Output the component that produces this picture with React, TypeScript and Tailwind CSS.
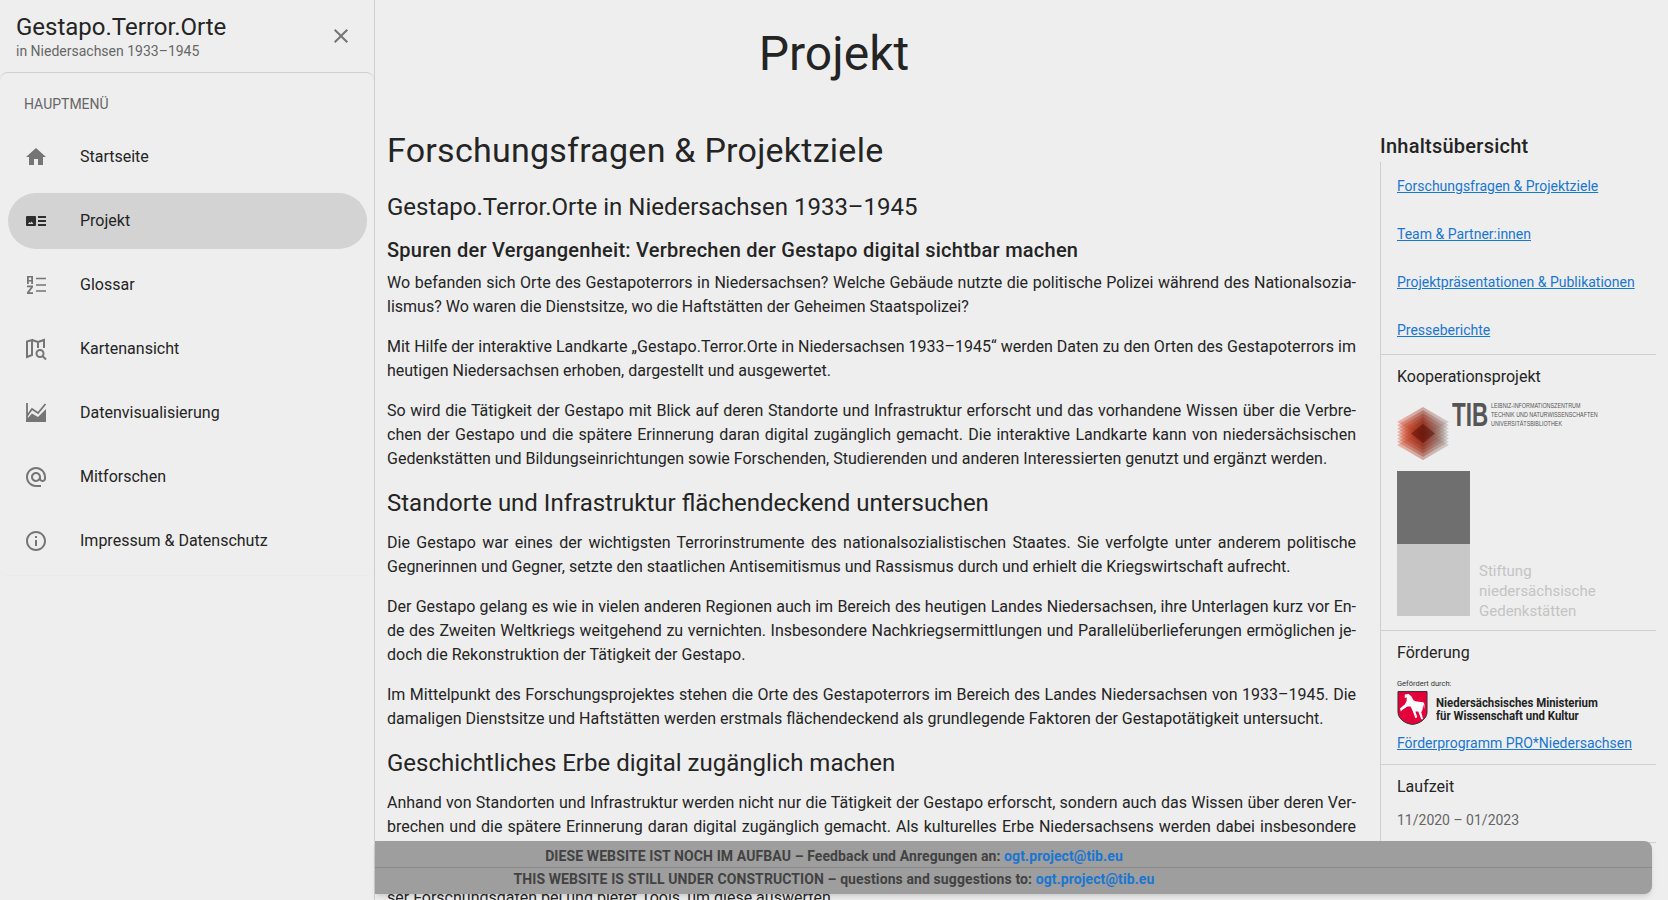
import { MdClose, MdHome, MdInfoOutline, MdOutlineAlternateEmail } from 'react-icons/md';

type NavItem = {
  label: string;
  icon: React.ReactNode;
  active?: boolean;
};

const ProjektIcon = () => (
  <svg viewBox="0 0 24 24" className="w-6 h-6 fill-[#2e2e2e]">
    <path d="M3 7h8a1 1 0 0 1 1 1v8a1 1 0 0 1-1 1H3a1 1 0 0 1-1-1V8a1 1 0 0 1 1-1z" />
    <path d="M4 15l1.500-2 1 1 1-1.500 2 2.500z" fill="#d3d3d3" />
    <path d="M14 7h8v2h-8zM14 11h8v2h-8zM14 15h8v2h-8z" />
  </svg>
);

const GlossarIcon = () => (
  <svg viewBox="0 0 24 24" className="w-6 h-6 fill-[#757575]">
    <path fillRule="evenodd" d="M3 3h6v8H7.200V8.500H4.800V11H3zM4.800 4.600V7h2.400V4.600zM3 12.500h6v1.800L5.200 19.300H9V21H3v-1.800l3.800-5H3z" />
    <path d="M12 4.700h10v1.600H12zM12 11.200h10v1.600H12zM12 17.200h10v1.600H12z" />
  </svg>
);

const KarteIcon = () => (
  <svg viewBox="0 0 24 24" className="w-6 h-6 fill-none stroke-[#757575] stroke-2">
    <path d="M3 4.500L8 3v15l-5 2zM8 3l6 2v6M14 5l6-2v8" />
    <circle cx="16" cy="16.500" r="3.500" />
    <path d="M18.500 19l3.500 3.500" />
  </svg>
);

const ChartIcon = () => (
  <svg viewBox="0 0 24 24" className="w-6 h-6">
    <path d="M2 21v-2l6-6.500 6 3.500 8-8v13z" fill="#757575" />
    <path d="M3 2v19M3 15l5-7 6 4 7.500-9" fill="none" stroke="#757575" strokeWidth="1.800" />
  </svg>
);

const navItems: NavItem[] = [
  { label: 'Startseite', icon: <MdHome className="w-6 h-6 text-[#757575]" /> },
  { label: 'Projekt', icon: <ProjektIcon />, active: true },
  { label: 'Glossar', icon: <GlossarIcon /> },
  { label: 'Kartenansicht', icon: <KarteIcon /> },
  { label: 'Datenvisualisierung', icon: <ChartIcon /> },
  { label: 'Mitforschen', icon: <MdOutlineAlternateEmail className="w-6 h-6 text-[#757575]" /> },
  { label: 'Impressum & Datenschutz', icon: <MdInfoOutline className="w-6 h-6 text-[#757575]" /> },
];

const tocLinks = [
  'Forschungsfragen & Projektziele',
  'Team & Partner:innen',
  'Projektpräsentationen & Publikationen',
  'Presseberichte',
];

const TibHex = () => {
  // stacked translucent rhombs, red on the left, grey on the right
  const layers = [0, 1, 2, 3, 4, 5, 6, 7];
  return (
    <svg viewBox="0 0 52 53" className="w-[52px] h-[53px] shrink-0">
      <defs>
        <linearGradient id="tibFade" x1="0" x2="1" y1="0" y2="0">
          <stop offset="0" stopColor="#e0401a" />
          <stop offset="0.5" stopColor="#8a1f0c" />
          <stop offset="1" stopColor="#8f8a88" />
        </linearGradient>
      </defs>
      {layers.map((i) => (
        <polygon
          key={i}
          points={`26,${i * 3.300} 52,${15 + i * 3.300} 26,${30 + i * 3.300} 0,${15 + i * 3.300}`}
          fill="url(#tibFade)"
          fillOpacity="0.34"
        />
      ))}
      <polygon points="26,17 38,26.500 26,36 14,26.500" fill="#4a0c02" fillOpacity="0.45" />
    </svg>
  );
};

const Shield = () => (
  <svg viewBox="0 0 32 36" className="w-[31px] h-9 shrink-0">
    <path d="M1 1h30v21c0 7-7 12-15 13C8 34 1 29 1 22z" fill="#e4003a" stroke="#333" strokeWidth="1" />
    <path
      d="M8 4l4-.5 3 2.500 2 4c3 2 6 1 8 2 3-1 4 2 3 7l-1-5c-.5 3 0 6-2 8.500l2 7h-2l-3-8h-3l2 6-2 1-3-8-2-4h-3l-5 3-2 2-1-3 5-4 2-4V7l-2 1z"
      fill="#fff"
    />
  </svg>
);

export default function App() {
  return (
    <div className="h-[900px] w-full flex overflow-hidden relative bg-[#eeeeee] text-[#242424] font-['Roboto',sans-serif]">
      {/* Navigation */}
      <aside className="w-[375px] shrink-0 border-r border-[#cfcfcf] flex flex-col">
        <div className="h-[72px] shrink-0 pl-4 pr-[21px] flex items-center justify-between">
          <div className="pt-[2px]">
            <div className="text-2xl leading-7">Gestapo.Terror.Orte</div>
            <div className="text-sm leading-5 text-[#666]">in Niedersachsen 1933–1945</div>
          </div>
          <MdClose className="w-6 h-6 text-[#757575]" />
        </div>
        <div className="h-[504px] border-t border-b border-t-[#cfcfcf] border-b-[#ebebeb] rounded-lg">
          <div className="text-sm text-[#666] pl-6 pt-[21px] leading-5">HAUPTMENÜ</div>
          <nav className="mt-[15px] pl-2 pr-[7px] flex flex-col gap-2">
            {navItems.map((item) => (
              <div
                key={item.label}
                className={`h-14 rounded-full pl-4 flex items-center gap-8 text-base ${item.active ? 'bg-[#d3d3d3]' : ''}`}
              >
                {item.icon}
                <span>{item.label}</span>
              </div>
            ))}
          </nav>
        </div>
      </aside>

      {/* Main */}
      <main className="flex-1 min-w-0">
        <h1 className="h-[106px] pr-[375px] pt-[22px] text-center text-5xl leading-[64px]">Projekt</h1>
        <div className="flex">
          <article className="w-[969px] ml-3 mt-6 shrink-0 text-base leading-6">
            <h2 className="text-[34px] tracking-[0.25px] leading-10 mb-[21px]">Forschungsfragen &amp; Projektziele</h2>
            <h3 className="text-2xl leading-8 mb-[11px]">Gestapo.Terror.Orte in Niedersachsen 1933–1945</h3>
            <h4 className="text-xl font-medium tracking-[0.25px] leading-8 mb-[5px]">Spuren der Vergangenheit: Verbrechen der Gestapo digital sichtbar machen</h4>
            <p className="text-justify mb-4">
              Wo befanden sich Orte des Gestapoterrors in Niedersachsen? Welche Gebäude nutzte die politische Polizei während des Nationalsozia{'\u00AD'}lismus? Wo waren die Dienstsitze, wo die Haftstätten der Geheimen Staatspolizei?
            </p>
            <p className="text-justify mb-4">
              Mit Hilfe der interaktive Landkarte „Gestapo.Terror.Orte in Niedersachsen 1933–1945“ werden Daten zu den Orten des Gestapoterrors im heutigen Niedersachsen erhoben, dargestellt und ausgewertet.
            </p>
            <p className="text-justify mb-4">
              So wird die Tätigkeit der Gestapo mit Blick auf deren Standorte und Infrastruktur erforscht und das vorhandene Wissen über die Verbre{'\u00AD'}chen der Gestapo und die spätere Erinnerung daran digital zugänglich gemacht. Die interaktive Landkarte kann von niedersächsischen Gedenkstätten und Bildungseinrichtungen sowie Forschenden, Studierenden und anderen Interessierten genutzt und ergänzt werden.
            </p>
            <h3 className="text-2xl leading-8 mb-3">Standorte und Infrastruktur flächendeckend untersuchen</h3>
            <p className="text-justify mb-4">
              Die Gestapo war eines der wichtigsten Terrorinstrumente des nationalsozialistischen Staates. Sie verfolgte unter anderem politische Gegnerinnen und Gegner, setzte den staatlichen Antisemitismus und Rassismus durch und erhielt die Kriegswirtschaft aufrecht.
            </p>
            <p className="text-justify mb-4">
              Der Gestapo gelang es wie in vielen anderen Regionen auch im Bereich des heutigen Landes Niedersachsen, ihre Unterlagen kurz vor En{'\u00AD'}de des Zweiten Weltkriegs weitgehend zu vernichten. Insbesondere Nachkriegsermittlungen und Parallelüberlieferungen ermöglichen je{'\u00AD'}doch die Rekonstruktion der Tätigkeit der Gestapo.
            </p>
            <p className="text-justify mb-4">
              Im Mittelpunkt des Forschungsprojektes stehen die Orte des Gestapoterrors im Bereich des Landes Niedersachsen von 1933–1945. Die damaligen Dienstsitze und Haftstätten werden erstmals flächendeckend als grundlegende Faktoren der Gestapotätigkeit untersucht.
            </p>
            <h3 className="text-2xl leading-8 mb-3">Geschichtliches Erbe digital zugänglich machen</h3>
            <p className="text-justify [text-align-last:justify]">
              Anhand von Standorten und Infrastruktur werden nicht nur die Tätigkeit der Gestapo erforscht, sondern auch das Wissen über deren Ver{'\u00AD'}brechen und die spätere Erinnerung daran digital zugänglich gemacht. Als kulturelles Erbe Niedersachsens werden dabei insbesondere
            </p>
            <p className="mt-[47px]">ser Forschungsdaten bei und bietet Tools, um diese auswerten</p>
          </article>

          {/* Right column */}
          <div className="ml-6 w-[276px] shrink-0">
            <div className="text-xl font-medium tracking-[0.25px] leading-8 mt-6">Inhaltsübersicht</div>
            <div className="border-l border-[#cfcfcf]">
              <div className="border-b border-[#cfcfcf] pl-4 pt-[14px] pb-[14px]">
                {tocLinks.map((link) => (
                  <a key={link} href="#" className="block text-sm leading-5 text-[#1976d2] underline mb-7 last:mb-0">
                    {link}
                  </a>
                ))}
              </div>
              <div className="border-b border-[#cfcfcf] pl-4 pt-[10px] pb-[14px]">
                <div className="text-base leading-6 mb-[13px]">Kooperationsprojekt</div>
                <div className="flex h-[69px] gap-[3px]">
                  <div className="pt-[5px]"><TibHex /></div>
                  <div className="flex items-start gap-[6px]">
                    <span className="w-[33px] font-['Liberation_Sans',sans-serif] font-bold text-[33px] leading-[26px] text-[#555] scale-x-[0.68] origin-left">TIB</span>
                    <span className="-mt-px font-['Liberation_Sans',sans-serif] text-[7px] leading-[9px] text-[#555] whitespace-nowrap uppercase scale-x-[0.77] origin-left">
                      Leibniz-Informationszentrum<br />Technik und Naturwissenschaften<br />Universitätsbibliothek
                    </span>
                  </div>
                </div>
                <div className="flex items-end gap-[9px]">
                  <div className="w-[73px] flex flex-col">
                    <div className="h-[73px] bg-[#6f6f6f]" />
                    <div className="h-[72px] bg-[#c8c8c8]" />
                  </div>
                  <div className="text-[15px] leading-5 text-[#c4c4c4] -mb-[5px]">Stiftung<br />niedersächsische<br />Gedenkstätten</div>
                </div>
              </div>
              <div className="border-b border-[#cfcfcf] pl-4 pt-[10px] pb-[11px]">
                <div className="text-base leading-6 mb-[14px]">Förderung</div>
                <div className="text-[7.500px] leading-[9px] text-[#333]">Gefördert durch:</div>
                <div className="flex items-center gap-2 mt-[2px] mb-[7px]">
                  <Shield />
                  <div className="pt-[3px] font-bold text-xs leading-[13px] text-[#222] whitespace-nowrap scale-x-[0.95] origin-left">Niedersächsisches Ministerium<br />für Wissenschaft und Kultur</div>
                </div>
                <a href="#" className="block text-sm leading-5 text-[#1976d2] underline">Förderprogramm PRO*Niedersachsen</a>
              </div>
              <div className="border-b border-[#cfcfcf] pl-4 pt-[10px] pb-3">
                <div className="text-base leading-6 mb-[11px]">Laufzeit</div>
                <div className="text-sm leading-5 text-[#666]">11/2020 – 01/2023</div>
              </div>
            </div>
          </div>
        </div>
      </main>

      {/* Construction notice */}
      <div className="absolute left-[375px] top-[841px] w-[1277px] h-[53px] rounded-r-lg bg-[#9e9e9e] shadow-md text-sm font-bold tracking-[0.1px] text-[#424242] text-center">
        <div className="h-[27px] leading-[30px] pr-[359px] border-b border-[#8a8a8a]">
          DIESE WEBSITE IST NOCH IM AUFBAU – Feedback und Anregungen an: <span className="text-[#1976d2]">ogt.project@tib.eu</span>
        </div>
        <div className="h-[26px] leading-[23px] pr-[359px]">
          THIS WEBSITE IS STILL UNDER CONSTRUCTION – questions and suggestions to: <span className="text-[#1976d2]">ogt.project@tib.eu</span>
        </div>
      </div>
    </div>
  );
}
